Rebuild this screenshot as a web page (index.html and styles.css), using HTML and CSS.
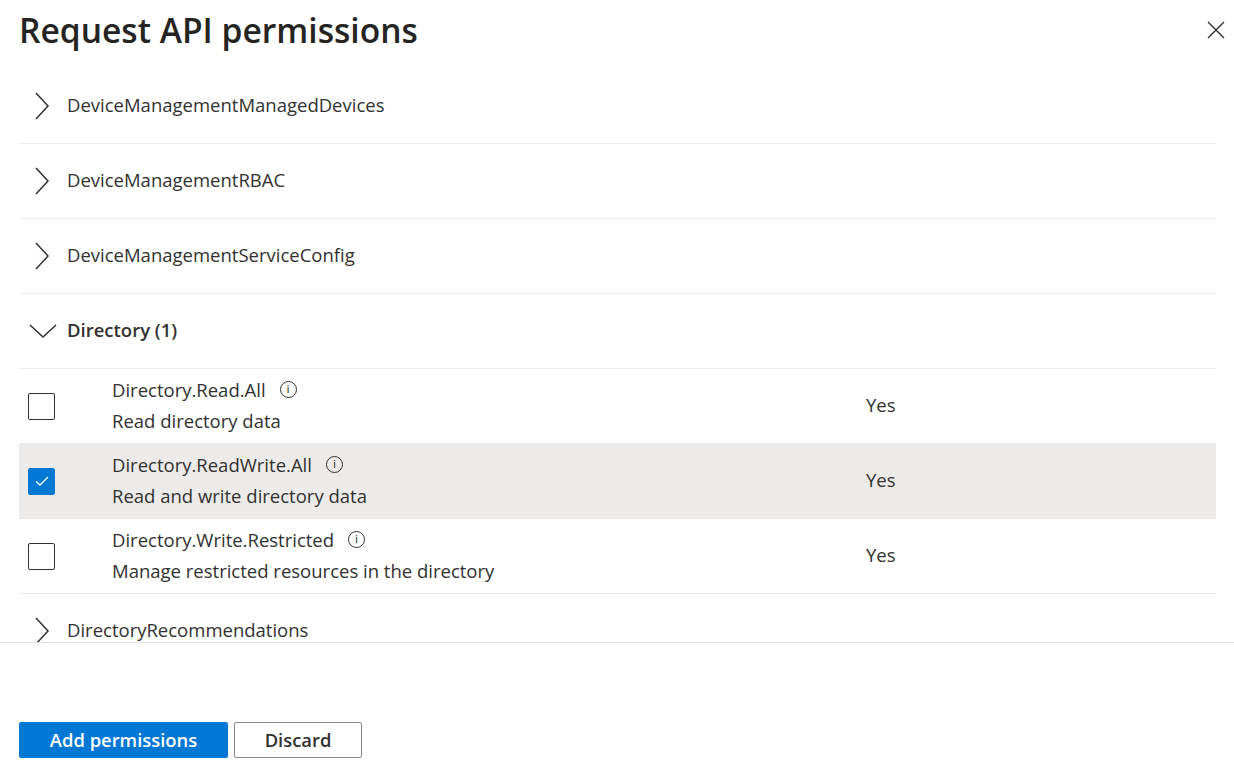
FILE: index.html
```html
<!DOCTYPE html>
<html lang="en">
<head>
<meta charset="utf-8">
<title>Request API permissions</title>
<link rel="stylesheet" href="styles.css">
</head>
<body>
<div class="panel">
  <header class="header">
    <h1 class="title">Request API permissions</h1>
    <button class="close" aria-label="Close">
      <svg width="18" height="18" viewBox="0 0 18 18"><path d="M1 1 L17 17 M17 1 L1 17" stroke="#323130" stroke-width="1.4" fill="none"/></svg>
    </button>
  </header>

  <div class="scroll">
    <div class="list">
      <div class="group">
        <span class="chev"><svg width="16" height="28" viewBox="0 0 16 28"><path d="M2 1 L14 14 L2 27" stroke="#323130" stroke-width="1.5" fill="none"/></svg></span>
        <span class="gname">DeviceManagementManagedDevices</span>
      </div>
      <div class="group">
        <span class="chev"><svg width="16" height="28" viewBox="0 0 16 28"><path d="M2 1 L14 14 L2 27" stroke="#323130" stroke-width="1.5" fill="none"/></svg></span>
        <span class="gname">DeviceManagementRBAC</span>
      </div>
      <div class="group">
        <span class="chev"><svg width="16" height="28" viewBox="0 0 16 28"><path d="M2 1 L14 14 L2 27" stroke="#323130" stroke-width="1.5" fill="none"/></svg></span>
        <span class="gname">DeviceManagementServiceConfig</span>
      </div>
      <div class="group">
        <span class="chev open"><svg width="28" height="16" viewBox="0 0 28 16"><path d="M1 2 L14 14 L27 2" stroke="#323130" stroke-width="1.5" fill="none"/></svg></span>
        <span class="gname strong">Directory (1)</span>
      </div>

      <div class="perm">
        <span class="cb"></span>
        <div class="pinfo">
          <div class="pname">Directory.Read.All <span class="info">i</span></div>
          <div class="pdesc">Read directory data</div>
        </div>
        <span class="admin">Yes</span>
      </div>
      <div class="perm selected">
        <span class="cb checked"><svg width="16" height="12" viewBox="0 0 16 12"><path d="M2 6.5 L6 10 L14 2" stroke="#fff" stroke-width="1.3" fill="none"/></svg></span>
        <div class="pinfo">
          <div class="pname">Directory.ReadWrite.All <span class="info">i</span></div>
          <div class="pdesc">Read and write directory data</div>
        </div>
        <span class="admin">Yes</span>
      </div>
      <div class="perm">
        <span class="cb"></span>
        <div class="pinfo">
          <div class="pname">Directory.Write.Restricted <span class="info">i</span></div>
          <div class="pdesc">Manage restricted resources in the directory</div>
        </div>
        <span class="admin">Yes</span>
      </div>

      <div class="group">
        <span class="chev"><svg width="16" height="28" viewBox="0 0 16 28"><path d="M2 1 L14 14 L2 27" stroke="#323130" stroke-width="1.5" fill="none"/></svg></span>
        <span class="gname">DirectoryRecommendations</span>
      </div>
    </div>
  </div>

  <footer class="footer">
    <button class="btn primary">Add permissions</button>
    <button class="btn secondary">Discard</button>
  </footer>
</div>
</body>
</html>
```

FILE: styles.css
```css
* { box-sizing: border-box; }
html, body { margin: 0; padding: 0; background: #fff; }
body {
  font-family: "Open Sans", "Noto Sans", "Liberation Sans", sans-serif;
  color: #323130;
  width: 1234px;
  height: 766px;
  overflow: hidden;
}
.panel { display: flex; flex-direction: column; height: 766px; }
.header {
  height: 69px;
  flex: none;
  display: flex;
  justify-content: space-between;
  align-items: flex-start;
  padding: 0 9px 0 19px;
}
.title {
  margin: 0;
  font-size: 33.6px;
  font-weight: 600;
  line-height: 60px;
  color: #252423;
}
.close {
  margin-top: 21px;
  background: none;
  border: 0;
  padding: 0;
  width: 18px;
  height: 18px;
  display: flex;
}
.scroll {
  height: 574px;
  flex: none;
  overflow: hidden;
  border-bottom: 1px solid #e1dfdd;
  padding: 0 18px 0 19px;
}
.list { display: flex; flex-direction: column; }
.group {
  height: 75px;
  flex: none;
  border-bottom: 1px solid #edebe9;
  display: flex;
  align-items: center;
  font-size: 18.5px;
}
.chev {
  width: 48px;
  display: flex;
  padding-left: 15px;
}
.chev.open { padding-left: 10px; }
.gname { line-height: 24px; margin-bottom: 2px; }
.gname.strong { font-weight: 600; }
.perm {
  height: 75px;
  flex: none;
  border-bottom: 1px solid #edebe9;
  display: flex;
  align-items: center;
  font-size: 18.5px;
}
.perm.selected { background: #edebe9; }
.cb {
  width: 27px;
  height: 27px;
  margin-left: 9px;
  border: 1px solid #323130;
  border-radius: 2px;
  display: flex;
  align-items: center;
  justify-content: center;
}
.cb.checked { background: #0078d4; border-color: #0078d4; }
.pinfo {
  margin-left: 57px;
  margin-bottom: 2px;
  width: 754px;
  display: flex;
  flex-direction: column;
  gap: 7px;
}
.pname, .pdesc { line-height: 24px; }
.pname { display: flex; align-items: center; }
.info {
  display: inline-flex;
  align-items: center;
  justify-content: center;
  width: 17px;
  height: 17px;
  margin-left: 14px;
  border: 1px solid #323130;
  border-radius: 50%;
  font-size: 11px;
  line-height: 1;
  font-family: "DejaVu Sans", sans-serif;
}
.admin { line-height: 24px; margin-bottom: 2px; }
.footer {
  padding: 79px 0 0 19px;
  display: flex;
  gap: 6px;
}
.btn {
  height: 36px;
  border-radius: 2px;
  font-family: "Open Sans", "Noto Sans", sans-serif;
  font-size: 18.4px;
  font-weight: 600;
  padding: 0 0 2px;
}
.primary {
  width: 209px;
  background: #0078d4;
  border: 1px solid #0078d4;
  color: #fff;
}
.secondary {
  width: 128px;
  background: #fff;
  border: 1px solid #8a8886;
  color: #323130;
}
```
